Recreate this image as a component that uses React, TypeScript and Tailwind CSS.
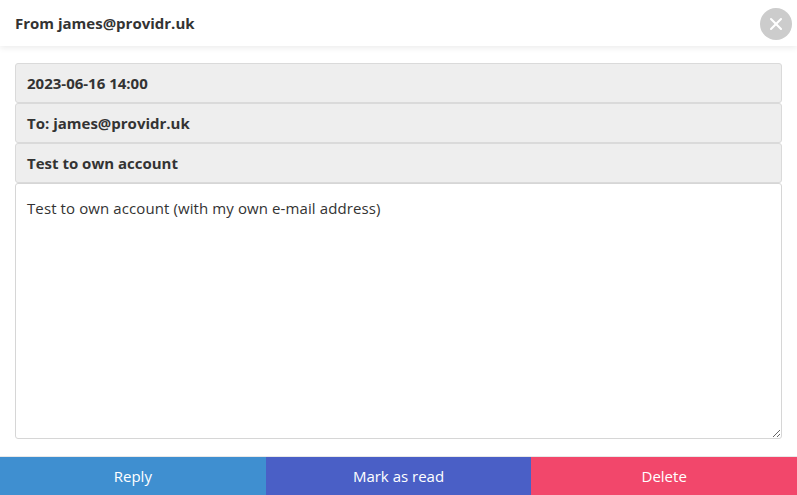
import { X } from "lucide-react";

const fields = ["2023-06-16 14:00", "To: james@providr.uk", "Test to own account"];

const actions = [
  { label: "Reply", className: "bg-[#3f8fd0]" },
  { label: "Mark as read", className: "bg-[#4a5fc6]" },
  { label: "Delete", className: "bg-[#f2476b]" },
];

export default function App() {
  return (
    <div className="flex h-[495px] w-[797px] flex-col bg-white font-['Open_Sans',sans-serif] text-[#333]">
      <header className="relative z-10 flex h-[46px] shrink-0 items-center justify-between bg-white pl-[15px] pr-[5px] pt-[1px] shadow-[0_2px_6px_rgba(0,0,0,0.08)]">
        <h1 className="text-[15px] font-bold">From james@providr.uk</h1>
        <button className="flex h-[32px] w-[32px] items-center justify-center rounded-full bg-[#cccccc] text-white">
          <X className="h-5 w-5" strokeWidth={2.5} />
        </button>
      </header>

      <main className="flex flex-1 flex-col px-[15px] pt-[17px] pb-[17px]">
        {fields.map((f) => (
          <div
            key={f}
            className="flex h-[40px] items-center rounded-[3px] border border-[#dadada] bg-[#eeeeee] px-[11px] text-[15px] font-bold"
          >
            {f}
          </div>
        ))}
        <textarea
          readOnly
          defaultValue="Test to own account (with my own e-mail address)"
          className="flex-1 resize-y rounded-[3px] border border-[#d6d6d6] bg-white px-[11px] pt-[13px] text-[15px] leading-[22px] tracking-[0.1px] text-[#333] outline-none"
        />
      </main>

      <footer className="flex h-[39px] shrink-0 border-t border-[#e8e8e8]">
        {actions.map((a) => (
          <button
            key={a.label}
            className={`flex flex-1 items-center justify-center pt-[1px] text-[15px] text-white ${a.className}`}
          >
            {a.label}
          </button>
        ))}
      </footer>
    </div>
  );
}
